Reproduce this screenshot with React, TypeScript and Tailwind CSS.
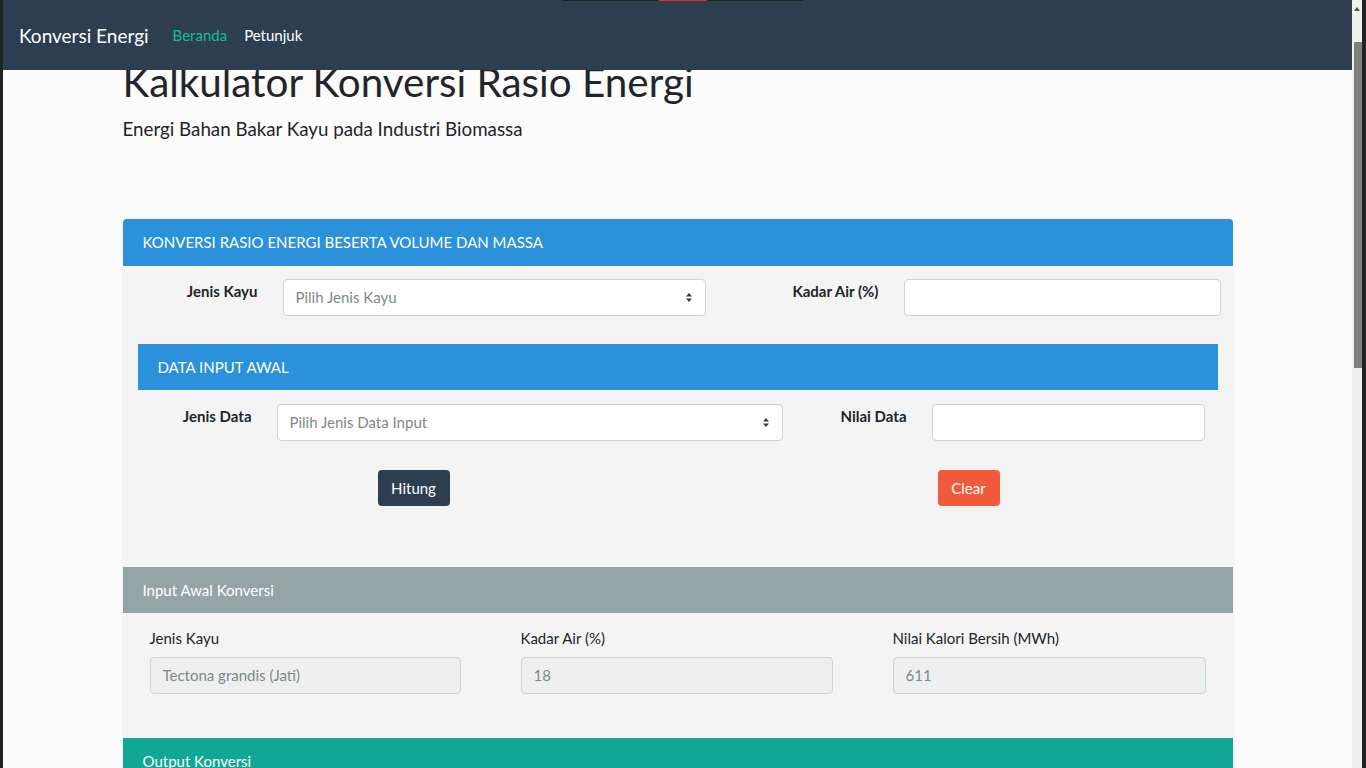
import React from "react";

function Caret() {
  return (
    <svg width="8" height="11" viewBox="0 0 8 11" className="shrink-0">
      <path d="M4 1 L7 4.5 L1 4.5 Z" fill="#343a40" />
      <path d="M4 10 L7 6.5 L1 6.5 Z" fill="#343a40" />
    </svg>
  );
}

function SelectBox({ text, width }: { text: string; width: string }) {
  return (
    <div
      className={`${width} h-[37px] bg-white border border-[#ced4da] rounded-[4px] flex items-center justify-between pl-[12px] pr-[12px] text-[15px] text-[#7b8a8b]`}
    >
      <span>{text}</span>
      <Caret />
    </div>
  );
}

function ReadOnly({ label, value, width }: { label: string; value: string; width: string }) {
  return (
    <div className={`${width} flex flex-col`}>
      <div className="text-[15px] leading-[22px] text-[#212529]">{label}</div>
      <div className="mt-[8px] h-[37px] bg-[#ecf0f1] border border-[#ced4da] rounded-[4px] flex items-center pl-[12px] text-[15px] text-[#7b8a8b]">
        {value}
      </div>
    </div>
  );
}

export default function App() {
  return (
    <div className="w-[1366px] h-[768px] overflow-hidden flex bg-[#222] font-['Lato',sans-serif]">
      <div className="w-[3px] h-full bg-[#222]" />
      <div className="w-[1349px] h-full relative bg-[#fcfcfc] overflow-hidden">
        {/* fixed navbar */}
        <div className="absolute top-0 left-0 right-0 h-[70px] bg-[#2c3e50] z-10 flex items-center pl-[16px]">
          <span className="text-[19px] text-white leading-none">Konversi Energi</span>
          <span className="ml-[24px] text-[15px] text-[#18bc9c]">Beranda</span>
          <span className="ml-[17px] text-[15px] text-white">Petunjuk</span>
        </div>
        <div className="absolute top-0 left-[560px] w-[240px] h-[1px] bg-[#222] z-20" />
        <div className="absolute top-0 left-[656px] w-[48px] h-[1px] bg-[#d62d2d] z-20" />

        <div className="w-[1110px] mx-auto pt-[58px]">
          <h1 className="text-[40.4px] leading-[48px] font-normal text-[#212529]">
            Kalkulator Konversi Rasio Energi
          </h1>
          <p className="mt-[9px] text-[18.75px] leading-[28px] font-normal text-[#212529]">
            Energi Bahan Bakar Kayu pada Industri Biomassa
          </p>

          <div className="mt-[76px] rounded-t-[4px] overflow-hidden shadow-[0_0_3px_rgba(220,200,230,0.4)]">
            <div className="h-[47px] bg-[#2a91da] flex items-center px-[20px] text-[15px] text-white uppercase">
              Konversi Rasio Energi Beserta Volume dan Massa
            </div>
            <div className="bg-[#f4f4f4]">
              {/* row 1 */}
              <div className="flex items-start pt-[13px]">
                <div className="w-[135px] text-right pt-[1px] text-[15px] leading-[22px] font-bold text-[#212529]">
                  Jenis Kayu
                </div>
                <div className="ml-[25px]">
                  <SelectBox text="Pilih Jenis Kayu" width="w-[423px]" />
                </div>
                <div className="w-[173px] text-right pt-[1px] text-[15px] leading-[22px] font-bold text-[#212529]">
                  Kadar Air (%)
                </div>
                <div className="ml-[25px] w-[317px] h-[37px] bg-white border border-[#ced4da] rounded-[4px]" />
              </div>

              {/* nested card */}
              <div className="mx-[15px] mt-[28px]">
                <div className="h-[46px] bg-[#2a91da] flex items-center px-[20px] text-[15px] text-white uppercase">
                  Data Input Awal
                </div>
                <div className="flex items-start pt-[14px]">
                  <div className="w-[114px] text-right pt-[1px] text-[15px] leading-[22px] font-bold text-[#212529]">
                    Jenis Data
                  </div>
                  <div className="ml-[25px]">
                    <SelectBox text="Pilih Jenis Data Input" width="w-[506px]" />
                  </div>
                  <div className="w-[124px] text-right pt-[1px] text-[15px] leading-[22px] font-bold text-[#212529]">
                    Nilai Data
                  </div>
                  <div className="ml-[25px] w-[273px] h-[37px] bg-white border border-[#ced4da] rounded-[4px]" />
                </div>
                <div className="flex mt-[29px]">
                  <div className="ml-[240px] w-[72px] h-[36px] rounded-[4px] bg-[#2c3e50] text-white text-[15px] flex items-center justify-center">
                    Hitung
                  </div>
                  <div className="ml-[488px] w-[62px] h-[36px] rounded-[4px] bg-[#f15a3b] text-white text-[15px] flex items-center justify-center">
                    Clear
                  </div>
                </div>
              </div>

              {/* input awal konversi */}
              <div className="mt-[61px] h-[46px] bg-[#95a5a6] flex items-center px-[20px] text-[15px] text-white">
                Input Awal Konversi
              </div>
              <div className="flex gap-[60px] pl-[27px] pt-[14px] pb-[44px]">
                <ReadOnly label="Jenis Kayu" value="Tectona grandis (Jati)" width="w-[311px]" />
                <ReadOnly label="Kadar Air (%)" value="18" width="w-[312px]" />
                <ReadOnly label="Nilai Kalori Bersih (MWh)" value="611" width="w-[313px]" />
              </div>

              <div className="h-[46px] bg-[#10a895] flex items-center px-[20px] text-[15px] text-white">
                Output Konversi
              </div>
            </div>
          </div>
        </div>
      </div>
      {/* scrollbar */}
      <div className="w-[10px] h-full bg-[#f0f0f0] relative">
        <svg width="8" height="6" viewBox="0 0 8 6" className="absolute top-[6px] left-[1px]">
          <path d="M4 1 L7 5 L1 5 Z" fill="#505050" />
        </svg>
        <div className="absolute top-[42px] left-[2px] w-[8px] h-[326px] bg-[#808080]" />
      </div>
      <div className="w-[4px] h-full bg-[#222]" />
    </div>
  );
}
